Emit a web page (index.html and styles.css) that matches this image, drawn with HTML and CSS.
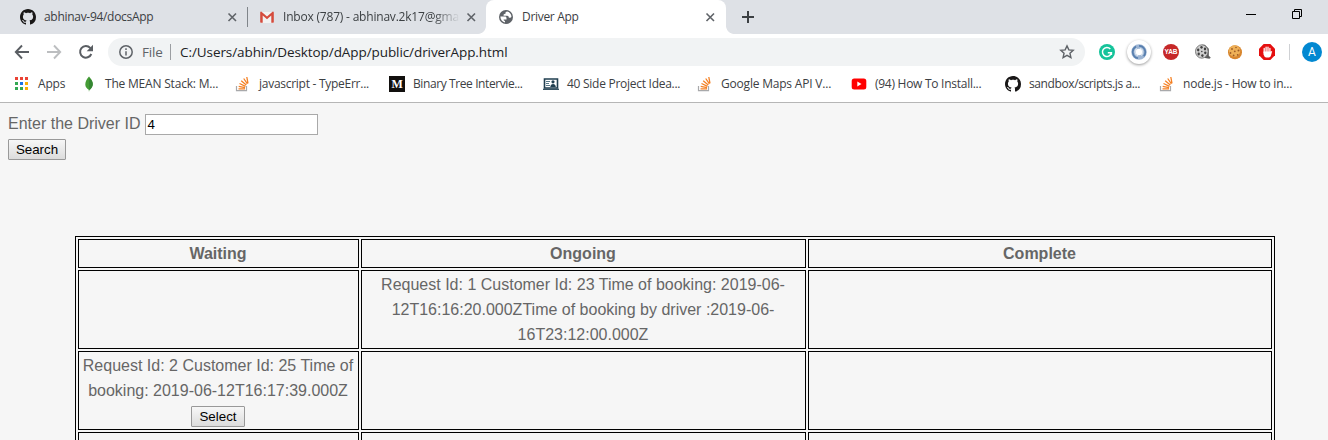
FILE: index.html
```html
<!DOCTYPE html>
<html lang="en">
<head>
<meta charset="utf-8">
<title>Driver App</title>
<link rel="stylesheet" href="styles.css">
</head>
<body>
<svg class="defs" aria-hidden="true">
  <symbol id="github" viewBox="0 0 16 16"><path fill="#191717" d="M8 0C3.58 0 0 3.58 0 8c0 3.54 2.29 6.53 5.47 7.59.4.07.55-.17.55-.38 0-.19-.01-.82-.01-1.49-2.01.37-2.53-.49-2.69-.94-.09-.23-.48-.94-.82-1.13-.28-.15-.68-.52-.01-.53.63-.01 1.08.58 1.23.82.72 1.21 1.87.87 2.33.66.07-.52.28-.87.51-1.07-1.78-.2-3.64-.89-3.64-3.95 0-.87.31-1.59.82-2.15-.08-.2-.36-1.02.08-2.12 0 0 .67-.21 2.2.82.64-.18 1.32-.27 2-.27s1.36.09 2 .27c1.53-1.04 2.2-.82 2.2-.82.44 1.1.16 1.92.08 2.12.51.56.82 1.27.82 2.15 0 3.07-1.87 3.75-3.65 3.95.29.25.54.73.54 1.48 0 1.07-.01 1.93-.01 2.2 0 .21.15.46.55.38A8.01 8.01 0 0 0 16 8c0-4.42-3.58-8-8-8z"/></symbol>
  <symbol id="close" viewBox="0 0 16 16"><path d="M4.500 4.500l7.500 7.500M12 4.500l-7.500 7.500" stroke="#5f6368" stroke-width="1.600"/></symbol>
  <symbol id="stack" viewBox="0 0 16 16"><g fill="none"><path d="M1.500 10v4.700h10V10" stroke="#a8a9ab" stroke-width="1.200"/><path d="M3.500 12.800h6.500M3.700 10.300l6.300 1.300M4.500 7.500l6 2.800M6.200 4.700l5.100 4.200M8.700 2.500l3.700 5.400M11.800 1l1.200 6.300" stroke="#f48024" stroke-width="1.300"/></g></symbol>
</svg>

<header class="browser">
  <div class="tabs">
    <div class="tab">
      <svg class="icon"><use href="#github"/></svg>
      <span class="tab-title">abhinav-94/docsApp</span>
      <svg class="icon"><use href="#close"/></svg>
    </div>
    <div class="tab divided">
      <svg class="icon" viewBox="0 0 16 16"><path d="M2 3h12v11H2z" fill="#f2f2f2"/><path d="M1.200 3.400Q1.200 2.400 2.200 2.400L8 7.500l5.800-5.100q1 0 1 1V13q0 .7-.7.700H12.300V6.600L8 10.200 3.700 6.600v7.100H1.900q-.7 0-.7-.7z" fill="#d54b3d"/></svg>
      <span class="tab-title faded">Inbox (787) - abhinav.2k17@gma</span>
      <svg class="icon"><use href="#close"/></svg>
    </div>
    <div class="tab active">
      <svg class="icon" viewBox="0 0 16 16"><circle cx="8" cy="8" r="7" fill="#5f6368"/><path d="M9.200 2.500c-1.200.2-1.900.8-1.700 1.700.1.800-.6 1-1.500 1.100-.6.100-.5 1-.3 1.500h3.500c1.300 0 1.500.7 1.500 1.700 1.300.2 2 .5 2.700-.5.200-2.700-1.700-4.900-4.200-5.500zM2.400 7.500c-.1 3 1.900 5.500 4.600 6v-1.600c-.9 0-1.400-.5-1.400-1.400h2.900V9c0-.9-.6-1.500-1.500-1.500z" fill="#fff"/></svg>
      <span class="tab-title">Driver App</span>
      <svg class="icon"><use href="#close"/></svg>
    </div>
    <svg class="new-tab" viewBox="0 0 16 16"><path d="M8 2v12M2 8h12" stroke="#3c4043" stroke-width="2"/></svg>
    <div class="window-buttons">
      <svg viewBox="0 0 12 12"><path d="M1 5.500h10" stroke="#000"/></svg>
      <svg viewBox="0 0 12 12"><path d="M1.500 3.500h7v7h-7zM3.500 3.500v-2h7v7h-2" fill="none" stroke="#000"/></svg>
    </div>
  </div>

  <div class="toolbar">
    <div class="nav">
      <svg class="icon" viewBox="0 0 16 16"><path d="M15 8H2.500M8 1.500L1.800 8 8 14.500" fill="none" stroke="#5a5e63" stroke-width="1.900"/></svg>
      <svg class="icon" viewBox="0 0 16 16"><path d="M1 8h12.500M8 1.500L14.200 8 8 14.500" fill="none" stroke="#bcbec0" stroke-width="1.900"/></svg>
      <svg class="icon" viewBox="0 0 16 16"><path d="M13.300 10A5.800 5.800 0 1 1 12.200 3.900L13.500 5.200" fill="none" stroke="#5a5e63" stroke-width="2"/><path d="M15 .8v6.400H8.700z" fill="#5a5e63"/></svg>
    </div>
    <div class="omnibox">
      <svg class="icon" viewBox="0 0 16 16"><circle cx="8" cy="8" r="6.200" fill="none" stroke="#5f6368" stroke-width="1.500"/><path d="M8 7.200v4.200M8 4.300v1.600" stroke="#5f6368" stroke-width="1.500"/></svg>
      <span class="scheme">File</span>
      <span class="url">C:/Users/abhin/Desktop/dApp/public/driverApp.html</span>
      <svg class="icon" viewBox="0 0 16 16"><path d="M8 1.900l1.850 4 4.350.45-3.250 2.900.95 4.300L8 11.350l-3.900 2.200.95-4.300L1.800 6.350l4.350-.45z" fill="none" stroke="#5f6368" stroke-width="1.400"/></svg>
    </div>
    <div class="extensions">
      <svg class="icon" viewBox="0 0 16 16"><circle cx="8" cy="8" r="8" fill="#15c39a"/><path d="M11.300 5A4.500 4.500 0 1 0 12.400 8.700H8.800M12.400 8.700v2.400" fill="none" stroke="#fff" stroke-width="1.500"/></svg>
      <span class="puck"><svg class="icon" viewBox="0 0 16 16"><circle cx="8" cy="8" r="5.500" fill="none" stroke="#9db5d3" stroke-width="4.500"/><path d="M5 2.500A6.300 6.300 0 0 0 7 14.200M8 1.800a6.300 6.300 0 0 1 4.700 10.400" fill="none" stroke="#577eae" stroke-width="1.700"/><path d="M6 4.500a4 4 0 0 0 1 7.300M9 4.200a4 4 0 0 1 1 7.200" fill="none" stroke="#dce5ef" stroke-width="1.200"/></svg></span>
      <svg class="icon" viewBox="0 0 16 16"><circle cx="8" cy="8" r="8" fill="#c62828"/><text x="8" y="10.400" text-anchor="middle" class="yab">YAB</text></svg>
      <svg class="icon" viewBox="0 0 16 16"><path d="M7 .8h2.800l4 4v7l2 2-1.500 1-4.300-.7z" fill="#5b5b5b"/><ellipse cx="6.800" cy="7.500" rx="6.300" ry="6.700" fill="#cfcfcf" stroke="#666" stroke-width=".8"/><g fill="#404040"><ellipse cx="6.500" cy="3.300" rx="1.200" ry="1.400"/><ellipse cx="10" cy="5" rx="1.200" ry="1.400"/><ellipse cx="10.300" cy="8.800" rx="1.200" ry="1.400"/><ellipse cx="7.400" cy="11.600" rx="1.200" ry="1.400"/><ellipse cx="3.700" cy="10" rx="1.200" ry="1.400"/><ellipse cx="3.200" cy="6" rx="1.200" ry="1.400"/><circle cx="6.800" cy="7.500" r=".8"/></g></svg>
      <svg class="icon" viewBox="0 0 16 16"><circle cx="8" cy="8.200" r="7" fill="#d8862f"/><circle cx="7.500" cy="7" r="5.700" fill="#eeb057"/><g fill="#9c5a26"><circle cx="5" cy="5" r=".9"/><circle cx="9" cy="3.500" r=".8"/><circle cx="11.500" cy="6.500" r="1"/><circle cx="7.800" cy="7.300" r=".9"/><circle cx="3.500" cy="9" r=".9"/><circle cx="6.600" cy="11.400" r=".9"/><circle cx="10.700" cy="10.800" r=".9"/></g></svg>
      <svg class="icon" viewBox="0 0 16 16"><path d="M4.700 0h6.600L16 4.700v6.600L11.300 16H4.700L0 11.300V4.700z" fill="#e50f0f"/><path d="M5.200 8.800V4.500M7.100 8V3.200M9 8V3.200M10.900 9V4.500" stroke="#fff" stroke-width="1.300" stroke-linecap="round"/><path d="M4.500 7.500h7.100l1.600-.5-1.200 4.400q-.5 2-2.200 2.200H7.200q-2-.5-2.700-3z" fill="#fff"/></svg>
      <span class="separator"></span>
      <span class="avatar">A</span>
    </div>
  </div>

  <nav class="bookmarks">
    <div class="bookmark"><svg class="icon" viewBox="0 0 16 16"><path d="M1 1h3v3H1zM6 1h3v3H6zM11 1h3v3h-3z" fill="#ea4335"/><path d="M1 6h3v3H1zM1 11h3v3H1zM6 11h3v3H6z" fill="#34a853"/><path d="M6 6h3v3H6z" fill="#1a73e8"/><path d="M11 6h3v3h-3zM11 11h3v3h-3z" fill="#fbae05"/></svg><span class="loose">Apps</span></div>
    <div class="bookmark"><svg class="icon" viewBox="0 0 16 16"><path d="M8 .5C5.500 3.500 4.300 5.500 4.300 8.500c0 2.500 1.500 4 3.400 5.300L8 16l.3-2.200c2-1.500 3.500-3.400 3.500-5.800C11.800 5 10 3 8 .5z" fill="#449c35"/><path d="M8.200 2v12.500C10 13 11.800 11 11.800 8c0-2.500-1.600-4.300-3.600-6z" fill="#358633"/></svg><span class="loose">The MEAN Stack: M...</span></div>
    <div class="bookmark"><svg class="icon"><use href="#stack"/></svg><span class="snug">javascript - TypeErr...</span></div>
    <div class="bookmark"><svg class="icon" viewBox="0 0 16 16"><path d="M0 0h16v16H0z" fill="#12100e"/><text x="8" y="12.300" text-anchor="middle" class="medium">M</text></svg><span>Binary Tree Intervie...</span></div>
    <div class="bookmark"><svg class="icon" viewBox="0 0 16 16"><path d="M1.500 3h13v9h-13z" fill="#fff" stroke="#213f50" stroke-width="1.600"/><path d="M0 13.300h16" stroke="#213f50" stroke-width="1.200"/><path d="M3 5.500h4M3 7.500h3M3 9.500h4" stroke="#587887"/><circle cx="10" cy="5.800" r="1.600" fill="#213f50"/><path d="M7.300 11c0-4 5.500-4 5.500 0z" fill="#213f50"/></svg><span class="snug">40 Side Project Idea...</span></div>
    <div class="bookmark"><svg class="icon"><use href="#stack"/></svg><span class="loose">Google Maps API V...</span></div>
    <div class="bookmark"><svg class="icon" viewBox="0 0 16 16"><rect x=".7" y="2.600" width="14.600" height="10.800" rx="2.500" fill="#f00"/><path d="M6.300 5.600v4.800L10.500 8z" fill="#fff"/></svg><span class="snug">(94) How To Install...</span></div>
    <div class="bookmark"><svg class="icon"><use href="#github"/></svg><span>sandbox/scripts.js a...</span></div>
    <div class="bookmark"><svg class="icon"><use href="#stack"/></svg><span class="loose">node.js - How to in...</span></div>
  </nav>
</header>

<main class="page">
  <div class="line"><label for="driver">Enter the Driver ID</label> <input id="driver" type="text" value="4"></div>
  <div class="line"><button class="search">Search</button></div>
  <table class="requests">
    <colgroup><col class="col-waiting"><col class="col-ongoing"><col class="col-complete"></colgroup>
    <tr><th>Waiting</th><th>Ongoing</th><th>Complete</th></tr>
    <tr class="request"><td></td><td>Request Id: 1 Customer Id: 23 Time of booking: 2019-06-<br>12T16:16:20.000ZTime of booking by driver :2019-06-<br>16T23:12:00.000Z</td><td></td></tr>
    <tr class="request"><td>Request Id: 2 Customer Id: 25 Time of<br>booking: 2019-06-12T16:17:39.000Z<br><button class="select">Select</button></td><td></td><td></td></tr>
    <tr class="request"><td></td><td></td><td></td></tr>
  </table>
</main>
</body>
</html>
```
FILE: styles.css
```css
* { box-sizing: border-box; }

html, body { height: 440px; overflow: hidden; }

body {
  display: flex;
  flex-direction: column;
  margin: 0;
  background: #f6f6f6;
  color: #666;
  font: 16px/25px "Liberation Sans", Arial, sans-serif;
}

.defs { display: none; }
.icon { display: block; flex: none; width: 16px; height: 16px; }

/* Browser chrome */
.browser {
  flex: none;
  height: 103px;
  background: #fff;
  border-bottom: 1px solid #b6b6b6;
  color: #3c4043;
  font: 12px/16px "Open Sans", "Noto Sans", sans-serif;
  white-space: nowrap;
}

.tabs {
  display: flex;
  height: 34px;
  padding-left: 8px;
  background: #dee1e6;
}

.tab {
  position: relative;
  display: flex;
  align-items: center;
  width: 239px;
  padding: 0 7px 0 12px;
}

.tab-title { flex: 1; margin-left: 8px; letter-spacing: -0.3px; }

.faded {
  letter-spacing: -0.2px;
  -webkit-mask-image: linear-gradient(90deg, #000 150px, transparent 177px);
  mask-image: linear-gradient(90deg, #000 150px, transparent 177px);
}

.divided::before {
  content: "";
  position: absolute;
  left: 0;
  top: 7px;
  width: 1px;
  height: 20px;
  background: #80858a;
}

.active { width: 240px; padding-right: 8px; background: #fff; border-radius: 8px 8px 0 0; }
.active::before, .active::after {
  content: "";
  position: absolute;
  bottom: 0;
  width: 8px;
  height: 8px;
}
.active::before { left: -8px; background: radial-gradient(circle at 0 0, transparent 7.5px, #fff 8.2px); }
.active::after { right: -8px; background: radial-gradient(circle at 100% 0, transparent 7.5px, #fff 8.2px); }

.new-tab { width: 16px; height: 16px; margin: 9px 0 0 14px; }
.window-buttons { display: flex; gap: 34px; margin: 8px 25px 0 auto; }
.window-buttons svg { display: block; width: 12px; height: 12px; }
.window-buttons svg:first-child { margin-top: 1px; }

.toolbar { display: flex; align-items: center; height: 36px; }
.nav { display: flex; gap: 16px; padding-left: 14px; width: 108px; }

.omnibox {
  display: flex;
  align-items: center;
  width: 977px;
  height: 28px;
  padding: 0 10px;
  border-radius: 14px;
  background: #f1f3f4;
  font-size: 13.5px;
}
.scheme { width: 28px; margin-left: 8px; color: #5f6368; letter-spacing: -0.2px; }
.url {
  flex: 1;
  padding-left: 9px;
  border-left: 1px solid #9b9ea2;
  color: #202124;
  letter-spacing: -0.08px;
}

.extensions { display: flex; align-items: center; gap: 16px; margin-left: 14px; }
.puck {
  display: flex;
  align-items: center;
  justify-content: center;
  width: 24px;
  height: 24px;
  margin: 0 -4px;
  border-radius: 50%;
  background: #fff;
  box-shadow: 0 1px 3px rgba(0, 0, 0, .4);
}
.yab { fill: #fff; font: bold 6.500px "Liberation Sans", sans-serif; }
.separator { width: 1px; height: 16px; margin: 0 -4px 0 -2px; background: #cfd1d4; }
.avatar {
  width: 20px;
  height: 20px;
  border-radius: 50%;
  background: #0288d1;
  color: #fff;
  font: 12px/20px Roboto, sans-serif;
  text-align: center;
}

.bookmarks {
  display: grid;
  grid-template-columns: 67px repeat(8, 154px);
  align-items: center;
  height: 28px;
  padding-left: 14px;
}
.bookmark { display: flex; align-items: center; gap: 8px; letter-spacing: -0.4px; }
.snug { letter-spacing: -0.27px; }
.loose { letter-spacing: -0.2px; }
.medium { fill: #fff; font: bold 12px "Liberation Serif", serif; }

/* Driver page */
.page { flex: 1; min-height: 0; padding: 8px 8px 0; overflow: hidden; }
.line { display: flex; align-items: center; gap: 5px; height: 25px; }

input {
  width: 173px;
  height: 21px;
  margin-top: 2px;
  padding: 1px;
  border: 1px solid #a9a9a9;
  background: #fff;
  color: #000;
  font: 13.333px "Liberation Sans", Arial, sans-serif;
}

button {
  height: 21px;
  padding: 0;
  border: 1px solid #999;
  border-radius: 1px;
  background: linear-gradient(#f7f7f7, #dcdcdc);
  color: #000;
  font: 13.333px "Liberation Sans", Arial, sans-serif;
}
.search { width: 58px; margin-top: 2px; }
.select { display: block; width: 54px; margin: 3px auto 1px; }

.requests {
  width: 1200px;
  margin: 75px 0 0 67px;
  border: 1px solid #000;
  border-spacing: 2px;
  table-layout: fixed;
  text-align: center;
}
.requests th, .requests td { padding: 1px 2px 1px 1px; border: 1px solid #000; }
.requests th { height: 29px; }
.request { height: 79px; }
.col-waiting { width: 281px; }
.col-ongoing { width: 445px; }
.col-complete { width: 464px; }
```
